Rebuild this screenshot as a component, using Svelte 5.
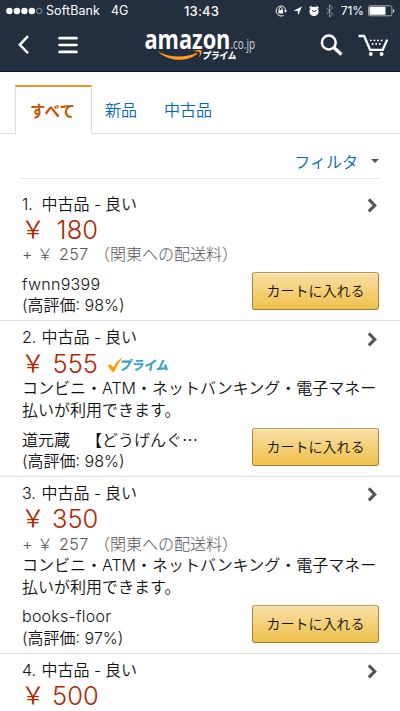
<script>
  const tabs = ['すべて', '新品', '中古品'];

  let active = $state('すべて');

  const payment = 'コンビニ・ATM・ネットバンキング・電子マネー払いが利用できます。';

  const offers = [
    { id: 1, price: '180', shipping: '257', seller: 'fwnn9399', rating: 98 },
    { id: 2, price: '555', prime: true, payment, seller: '道元蔵　【どうげんぐ…', wide: true, rating: 98 },
    { id: 3, price: '350', shipping: '257', payment, seller: 'books-floor', rating: 97 },
    { id: 4, price: '500' },
  ];
</script>

<div class="screen">
  <header>
    <div class="status">
      <svg class="signal" width="38" height="8" viewBox="0 0 38 8">
        {#each [0, 1, 2, 3] as i (i)}
          <circle cx={3.4 + i * 7.5} cy="4" r="3.2" fill="#fff" />
        {/each}
        <circle cx="33.2" cy="4" r="2.7" fill="none" stroke="#a7adb5" stroke-width="0.8" />
      </svg>
      <span class="carrier">SoftBank</span>
      <span class="network">4G</span>
      <span class="clock">13:43</span>
      <svg class="indicators" width="62" height="16" viewBox="0 0 62 16">
        <g fill="none" stroke="#fff">
          <path d="M9.6 3.6A5 5 0 1 0 9.6 12.4" stroke-width="1" />
          <path d="M9.6 3.6A5 5 0 0 1 11.4 8" stroke-width="1" />
          <path d="M5.2 7.2V6a1.5 1.5 0 0 1 3 0v1.2" stroke-width=".9" />
        </g>
        <path d="M4.4 7h4.6v3.4H4.4zM9.8 7.6h3.4l-1.7 2.2z" fill="#fff" />
        <path d="M28 3.6l-8.4 4.2 4.2.3.3 4.2z" fill="#fff" />
        <circle cx="40" cy="8.4" r="4.6" fill="#fff" />
        <path d="M35.6 5.2l2-1.8M44.4 5.2l-2-1.8" stroke="#fff" stroke-width="1.5" />
        <path d="M37.8 7.2l2.2 1.4 2.4-1.2" fill="none" stroke="#232f3e" stroke-width="1" />
        <path d="M52.5 5l6.2 6-3.2 3V1.8l3.2 3-6.2 6.2" fill="none" stroke="#8d95a0" stroke-width="1" />
      </svg>
      <span class="percent">71%</span>
      <svg class="battery" width="27" height="12" viewBox="0 0 27 12">
        <rect x=".5" y=".8" width="23.4" height="10" rx="1.6" fill="none" stroke="#a5abb3" />
        <rect x="1.5" y="1.8" width="16" height="8" rx=".6" fill="#fff" />
        <path d="M25 4a2 2 0 0 1 0 3.8z" fill="#d5d8dc" />
      </svg>
    </div>

    <div class="navbar">
      <svg class="back" width="12" height="20" viewBox="0 0 12 20">
        <path d="M10 1.2L1.8 9.8 10 18.2" fill="none" stroke="#fff" stroke-width="2.4" />
      </svg>
      <svg class="menu" width="20" height="18" viewBox="0 0 20 18">
        <path d="M1.5 2.2h17M1.5 9h17M1.5 15.9h17" stroke="#fff" stroke-width="2.7" stroke-linecap="round" />
      </svg>
      <svg class="logo" width="112" height="32" viewBox="0 0 112 32">
        <text class="brand" x="-.6" y="17.8" textLength="86" lengthAdjust="spacingAndGlyphs">amazon</text>
        <text class="domain" x="85.5" y="18" textLength="24.5" lengthAdjust="spacingAndGlyphs">.co.jp</text>
        <path d="M12.4 20C23 26.6 40 27.6 51.5 21.8l.8 1.2C42 31.6 22 30.6 12.4 20z" fill="#ff9c1f" />
        <path d="M48.6 20.1c3-1.6 7.6-1.6 8 0 .3 1.6-.7 4.6-2.7 6.2.7-2 1.4-4 .7-4.9-.8-.8-3.6-.7-6-1.3z" fill="#ff9c1f" />
        <text class="prime-word" transform="translate(57 28.4) skewX(-8)" textLength="34" lengthAdjust="spacingAndGlyphs">プライム</text>
      </svg>
      <svg class="search" width="23" height="22" viewBox="0 0 23 22">
        <circle cx="8.8" cy="8.5" r="6.9" fill="none" stroke="#fff" stroke-width="2.5" />
        <path d="M13.6 13.2l7.8 7.2" stroke="#fff" stroke-width="3.4" />
      </svg>
      <svg class="cart" width="31" height="23" viewBox="0 0 31 23">
        <path d="M.5 2h5.6l6 13.8h12.6L29.2 5.6" fill="none" stroke="#fff" stroke-width="2.3" />
        <circle cx="12.8" cy="20" r="1.9" fill="#fff" />
        <circle cx="23.6" cy="20" r="1.9" fill="#fff" />
        <g fill="#fff">
          <circle cx="12.8" cy="6.4" r=".95" />
          <circle cx="16.4" cy="6.4" r=".95" />
          <circle cx="20" cy="6.4" r=".95" />
          <circle cx="23.6" cy="6.4" r=".95" />
          <circle cx="14.6" cy="10" r=".95" />
          <circle cx="18.2" cy="10" r=".95" />
          <circle cx="21.8" cy="10" r=".95" />
        </g>
      </svg>
    </div>
  </header>

  <nav class="tabs">
    {#each tabs as tab (tab)}
      <button class="tab" class:active={tab === active} onclick={() => (active = tab)}>{tab}</button>
    {/each}
  </nav>

  <div class="filter">
    <span>フィルタ</span>
    <i class="caret"></i>
  </div>

  <ul class="offers">
    {#each offers as offer (offer.id)}
      <li>
        <div class="title">
          <span><span class="num">{offer.id}.</span>中古品<span class="dash">-</span>良い</span>
          <svg width="11" height="15" viewBox="0 0 11 15">
            <path d="M1.8 1.4l6 6-6 6" fill="none" stroke="#555" stroke-width="3" />
          </svg>
        </div>
        <div class="price">
          <span class="yen">￥</span><span class="amount">{offer.price}</span>
          {#if offer.prime}
            <svg class="prime" width="66" height="18" viewBox="0 0 66 18">
              <path d="M.6 9.6l3.2-1.2 2.4 3.2C8.6 7 11.8 3.4 15.8 1 12.6 5.4 9.4 10.4 7.4 15.8H5.2z" fill="#f90" />
              <text transform="translate(12 14) skewX(-10)" textLength="49" lengthAdjust="spacingAndGlyphs">プライム</text>
            </svg>
          {/if}
        </div>
        {#if offer.shipping}
          <div class="shipping">
            <span class="plus">+</span><span class="yen">￥</span><span class="cost">{offer.shipping}</span>（関東への配送料）
          </div>
        {/if}
        {#if offer.payment}
          <p>{offer.payment}</p>
        {/if}
        {#if offer.seller}
          <div class="bottom">
            <div class="seller">
              <div class="name" class:wide={offer.wide}>{offer.seller}</div>
              <div class="rating">(高評価: {offer.rating}%)</div>
            </div>
            <button class="add">カートに入れる</button>
          </div>
        {/if}
      </li>
    {/each}
  </ul>
</div>

<style>
  :global(body) {
    overflow: hidden;
  }

  .screen {
    width: 400px;
    height: 711px;
    overflow: hidden;
    background: #fff;
    color: #111;
    font-family: Inter, 'Noto Sans CJK JP', sans-serif;
    font-size: 16px;
    font-weight: 350;
    line-height: 21.6px;
    text-spacing-trim: space-all;
  }

  button {
    font: inherit;
    border: none;
    padding: 0;
    background: none;
  }

  svg {
    display: block;
    flex: none;
    overflow: visible;
  }

  header {
    height: 72px;
    box-sizing: border-box;
    background: #232f3e;
    border-bottom: 1px solid #10192a;
    color: #fff;
  }

  .status {
    display: flex;
    align-items: center;
    height: 22px;
    padding-left: 6px;
    font-size: 12.5px;
    font-weight: 400;
    line-height: 22px;
    white-space: nowrap;
  }

  .carrier {
    width: 65px;
    margin-left: 2px;
    letter-spacing: 0.1px;
  }

  .network {
    width: 73px;
  }

  .clock {
    width: 90px;
    font-weight: 500;
    font-size: 13px;
    letter-spacing: 0.2px;
  }

  .percent {
    margin-left: 5px;
    width: 23px;
    font-size: 12px;
    letter-spacing: -0.2px;
  }

  .battery {
    margin-left: 4px;
  }

  .navbar {
    display: flex;
    align-items: center;
    height: 45px;
    padding-left: 18px;
  }

  .menu {
    margin-left: 28px;
  }

  .logo {
    margin: 5px 0 0 67px;
  }

  .brand {
    font: 700 26px 'Open Sans', sans-serif;
    fill: #fff;
  }

  .domain {
    font: 400 14.5px 'Open Sans', sans-serif;
    fill: #d0d3d8;
  }

  .prime-word {
    font: 900 9.5px 'Noto Sans CJK JP', sans-serif;
    fill: #fff;
  }

  .search {
    margin-left: 63px;
  }

  .cart {
    margin: 2px 0 0 15px;
  }

  .tabs {
    display: flex;
    align-items: flex-end;
    height: 62px;
    padding-left: 15px;
    box-sizing: border-box;
    border-bottom: 1px solid #ddd;
  }

  .tab {
    height: 48px;
    padding: 4px 14px 0 13px;
    color: #0066c0;
  }

  .tab.active {
    width: 77px;
    height: 49px;
    margin-bottom: -1px;
    padding: 2px 2px 0 0;
    box-sizing: border-box;
    border: 1px solid #ddd;
    border-top: 2px solid #f0932b;
    border-bottom: none;
    background: #fff;
    color: #c45500;
    font-size: 15.5px;
    font-weight: 700;
  }

  .filter {
    display: flex;
    justify-content: flex-end;
    align-items: center;
    height: 45px;
    margin: 0 21px;
    padding-top: 13px;
    box-sizing: border-box;
    border-bottom: 1px solid #e7e7e7;
    color: #0066c0;
  }

  .caret {
    margin: -4px 0 0 13px;
    border: 4px solid transparent;
    border-top-color: #555;
    border-bottom: none;
  }

  .offers {
    list-style: none;
    margin: 0;
    padding: 9px 0 0;
  }

  li {
    padding: 6px 21px 3.6px 22px;
    border-bottom: 1px solid #e0e0e0;
  }

  li:first-child {
    padding-top: 5.5px;
  }

  .title,
  .bottom {
    display: flex;
    justify-content: space-between;
  }

  .title,
  .shipping,
  .name,
  .rating {
    height: 21.6px;
  }

  .title svg {
    margin: 4.5px 1px 0 0;
  }

  .num {
    display: inline-block;
    width: 19.5px;
  }

  .dash {
    margin: 0 4.5px;
    letter-spacing: -0.8px;
  }

  .price {
    display: flex;
    align-items: center;
    height: 29.3px;
    color: #b12704;
    font-size: 24px;
    font-weight: 300;
  }

  .price .yen {
    width: 31px;
    margin-left: -1px;
    font-weight: 350;
  }

  .amount {
    width: 46px;
    font-size: 25.5px;
    text-align: right;
  }

  .prime {
    margin: 3px 0 0 9px;
  }

  .prime text {
    font: 900 13px 'Noto Sans CJK JP', sans-serif;
    fill: #3fa3c9;
  }

  .shipping {
    color: #555;
    font-weight: 300;
    white-space: nowrap;
  }

  .plus {
    display: inline-block;
    width: 15px;
  }

  .cost {
    display: inline-block;
    width: 35px;
    margin-left: 6px;
    letter-spacing: 0.4px;
  }

  p {
    margin: 0;
    width: 358px;
    line-break: anywhere;
  }

  .bottom {
    margin-top: 7.6px;
  }

  .name {
    letter-spacing: 0.25px;
  }

  .name.wide {
    font-family: 'Noto Sans CJK JP', sans-serif;
    letter-spacing: 0;
  }

  .add {
    width: 127px;
    height: 38px;
    margin-top: -1.5px;
    box-sizing: border-box;
    border: 1px solid #a88734;
    border-color: #b89b4f #a88734 #9c7e31;
    border-radius: 3px;
    background: linear-gradient(#f7dfa5, #f0c14b);
    box-shadow: inset 0 1px 0 rgba(255, 255, 255, 0.4);
    color: #111;
    font-size: 14px;
  }
</style>
